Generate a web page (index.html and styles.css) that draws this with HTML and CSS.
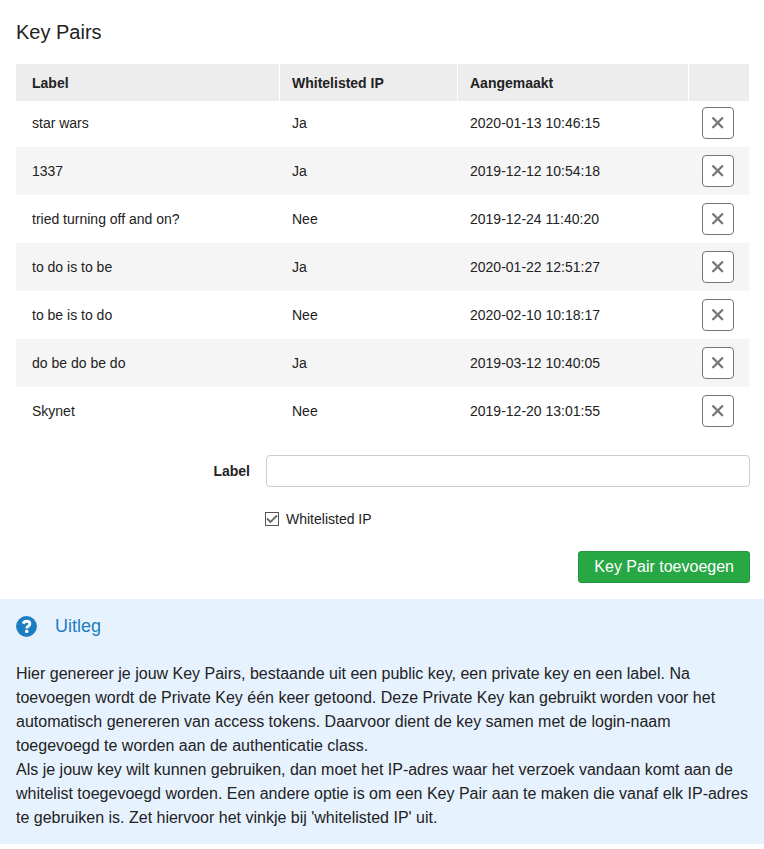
FILE: index.html
```html
<!DOCTYPE html>
<html lang="nl">
<head>
  <meta charset="UTF-8">
  <meta name="viewport" content="width=device-width, initial-scale=1">
  <title>Key Pairs</title>
  <link rel="stylesheet" href="styles.css">
</head>
<body>
  <svg class="sprite" aria-hidden="true">
    <symbol id="cross" viewBox="0 0 12 12">
      <path d="M1.2 1.2 L10.2 10.2 M10.2 1.2 L1.2 10.2" fill="none" stroke="currentColor" stroke-width="2.3" stroke-linecap="round"/>
    </symbol>
  </svg>

  <main>
    <section class="keys">
      <h1>Key Pairs</h1>
      <table>
        <colgroup>
          <col class="col-label">
          <col class="col-ip">
          <col>
          <col class="col-action">
        </colgroup>
        <thead>
          <tr>
            <th>Label</th>
            <th>Whitelisted IP</th>
            <th>Aangemaakt</th>
            <th></th>
          </tr>
        </thead>
        <tbody>
          <tr>
            <td>star wars</td>
            <td>Ja</td>
            <td>2020-01-13 10:46:15</td>
            <td><button type="button" class="delete" aria-label="Verwijder star wars"><svg><use href="#cross"/></svg></button></td>
          </tr>
          <tr>
            <td>1337</td>
            <td>Ja</td>
            <td>2019-12-12 10:54:18</td>
            <td><button type="button" class="delete" aria-label="Verwijder 1337"><svg><use href="#cross"/></svg></button></td>
          </tr>
          <tr>
            <td>tried turning off and on?</td>
            <td>Nee</td>
            <td>2019-12-24 11:40:20</td>
            <td><button type="button" class="delete" aria-label="Verwijder tried turning off and on?"><svg><use href="#cross"/></svg></button></td>
          </tr>
          <tr>
            <td>to do is to be</td>
            <td>Ja</td>
            <td>2020-01-22 12:51:27</td>
            <td><button type="button" class="delete" aria-label="Verwijder to do is to be"><svg><use href="#cross"/></svg></button></td>
          </tr>
          <tr>
            <td>to be is to do</td>
            <td>Nee</td>
            <td>2020-02-10 10:18:17</td>
            <td><button type="button" class="delete" aria-label="Verwijder to be is to do"><svg><use href="#cross"/></svg></button></td>
          </tr>
          <tr>
            <td>do be do be do</td>
            <td>Ja</td>
            <td>2019-03-12 10:40:05</td>
            <td><button type="button" class="delete" aria-label="Verwijder do be do be do"><svg><use href="#cross"/></svg></button></td>
          </tr>
          <tr>
            <td>Skynet</td>
            <td>Nee</td>
            <td>2019-12-20 13:01:55</td>
            <td><button type="button" class="delete" aria-label="Verwijder Skynet"><svg><use href="#cross"/></svg></button></td>
          </tr>
        </tbody>
      </table>
    </section>

    <form class="add-key">
      <div class="field">
        <label for="label">Label</label>
        <input type="text" id="label" name="label">
      </div>
      <div class="check">
        <input type="checkbox" id="whitelisted" name="whitelisted" checked>
        <label for="whitelisted">Whitelisted IP</label>
      </div>
      <button type="submit" class="submit">Key Pair toevoegen</button>
    </form>

    <section class="info">
      <h2>
        <svg class="help" viewBox="0 0 512 512" aria-hidden="true">
          <circle cx="256" cy="256" r="254" fill="currentColor"/>
          <path d="M172 186 C192 146 218 128 258 128 C308 128 338 156 338 192 C338 246 262 244 262 306" fill="none" stroke="#fff" stroke-width="70"/>
          <rect x="222" y="338" width="80" height="78" rx="26" fill="#fff"/>
        </svg>
        Uitleg
      </h2>
      <p>Hier genereer je jouw Key Pairs, bestaande uit een public key, een private key en een label. Na toevoegen wordt de Private Key één keer getoond. Deze Private Key kan gebruikt worden voor het automatisch genereren van access tokens. Daarvoor dient de key samen met de login-naam toegevoegd te worden aan de authenticatie class.</p>
      <p>Als je jouw key wilt kunnen gebruiken, dan moet het IP-adres waar het verzoek vandaan komt aan de whitelist toegevoegd worden. Een andere optie is om een Key Pair aan te maken die vanaf elk IP-adres te gebruiken is. Zet hiervoor het vinkje bij 'whitelisted IP' uit.</p>
    </section>
  </main>
</body>
</html>
```

FILE: styles.css
```css
* {
  box-sizing: border-box;
}
body {
  margin: 0;
  background: #fff;
  color: #222;
  font-family: "Liberation Sans", Arial, sans-serif;
  font-size: 14px;
  line-height: 24px;
}
h1, h2, p {
  margin: 0;
  font-weight: normal;
}
button, input {
  font-family: inherit;
  margin: 0;
}
.sprite {
  display: none;
}

/* table */
.keys {
  padding: 20px 15px 0 16px;
}
h1 {
  margin-bottom: 20px;
  font-size: 20px;
  line-height: 24px;
}
table {
  width: 100%;
  table-layout: fixed;
  border-collapse: separate;
  border-spacing: 0;
}
.col-label {
  width: 264px;
}
.col-ip {
  width: 178px;
}
.col-action {
  width: 60px;
}
th, td {
  padding: 8px 12px;
  text-align: left;
}
th:first-child, td:first-child {
  padding-left: 16px;
}
th {
  height: 37px;
  padding: 6px 12px;
  background: #ededed;
  border-right: 1px solid #fff;
}
th:last-child {
  border-right: none;
}
tbody tr:first-child td {
  padding-top: 6px;
}
tbody tr:nth-child(even) {
  background: #f5f5f5;
}
td:last-child {
  padding-left: 13px;
}
.delete {
  display: flex;
  align-items: center;
  justify-content: center;
  width: 32px;
  height: 32px;
  padding: 0;
  background: #fff;
  border: 1px solid #757575;
  border-radius: 4px;
  color: #757575;
  cursor: pointer;
}
.delete svg {
  width: 12px;
  height: 12px;
}

/* form */
.add-key {
  display: flex;
  flex-direction: column;
  gap: 20px;
  padding: 20px 14px 16px 16px;
}
.field {
  display: grid;
  grid-template-columns: 234px 1fr;
  gap: 16px;
  align-items: center;
}
.field label {
  font-weight: bold;
  text-align: right;
}
.field input {
  width: 100%;
  height: 32px;
  padding: 0 8px;
  border: 1px solid #ccc;
  border-radius: 4px;
  font-size: 14px;
}
.check {
  display: flex;
  align-items: center;
  gap: 7px;
  margin-left: 249px;
}
.check input {
  appearance: none;
  width: 14px;
  height: 14px;
  border: 1px solid #555;
  background: #fff;
}
.check input:checked {
  background: url("data:image/svg+xml,%3Csvg xmlns='http://www.w3.org/2000/svg' viewBox='0 0 12 12'%3E%3Cpath d='M1 5.5 4.5 9 11 2.5' fill='none' stroke='%23666' stroke-width='1.8'/%3E%3C/svg%3E") center / 12px 12px no-repeat #fff;
}
.submit {
  align-self: flex-end;
  height: 32px;
  padding: 0 15px;
  background: #28a745;
  border: 1px solid #23963e;
  border-radius: 3px;
  color: #fff;
  font-size: 16px;
  cursor: pointer;
}

/* uitleg */
.info {
  padding: 15px 14px 14px 16px;
  background: #e7f2ff;
  font-size: 16px;
}
h2 {
  display: flex;
  align-items: center;
  gap: 18px;
  margin-bottom: 24px;
  color: #1b7ec3;
  font-size: 18px;
  line-height: 24px;
}
.help {
  width: 21px;
  height: 21px;
}
```
